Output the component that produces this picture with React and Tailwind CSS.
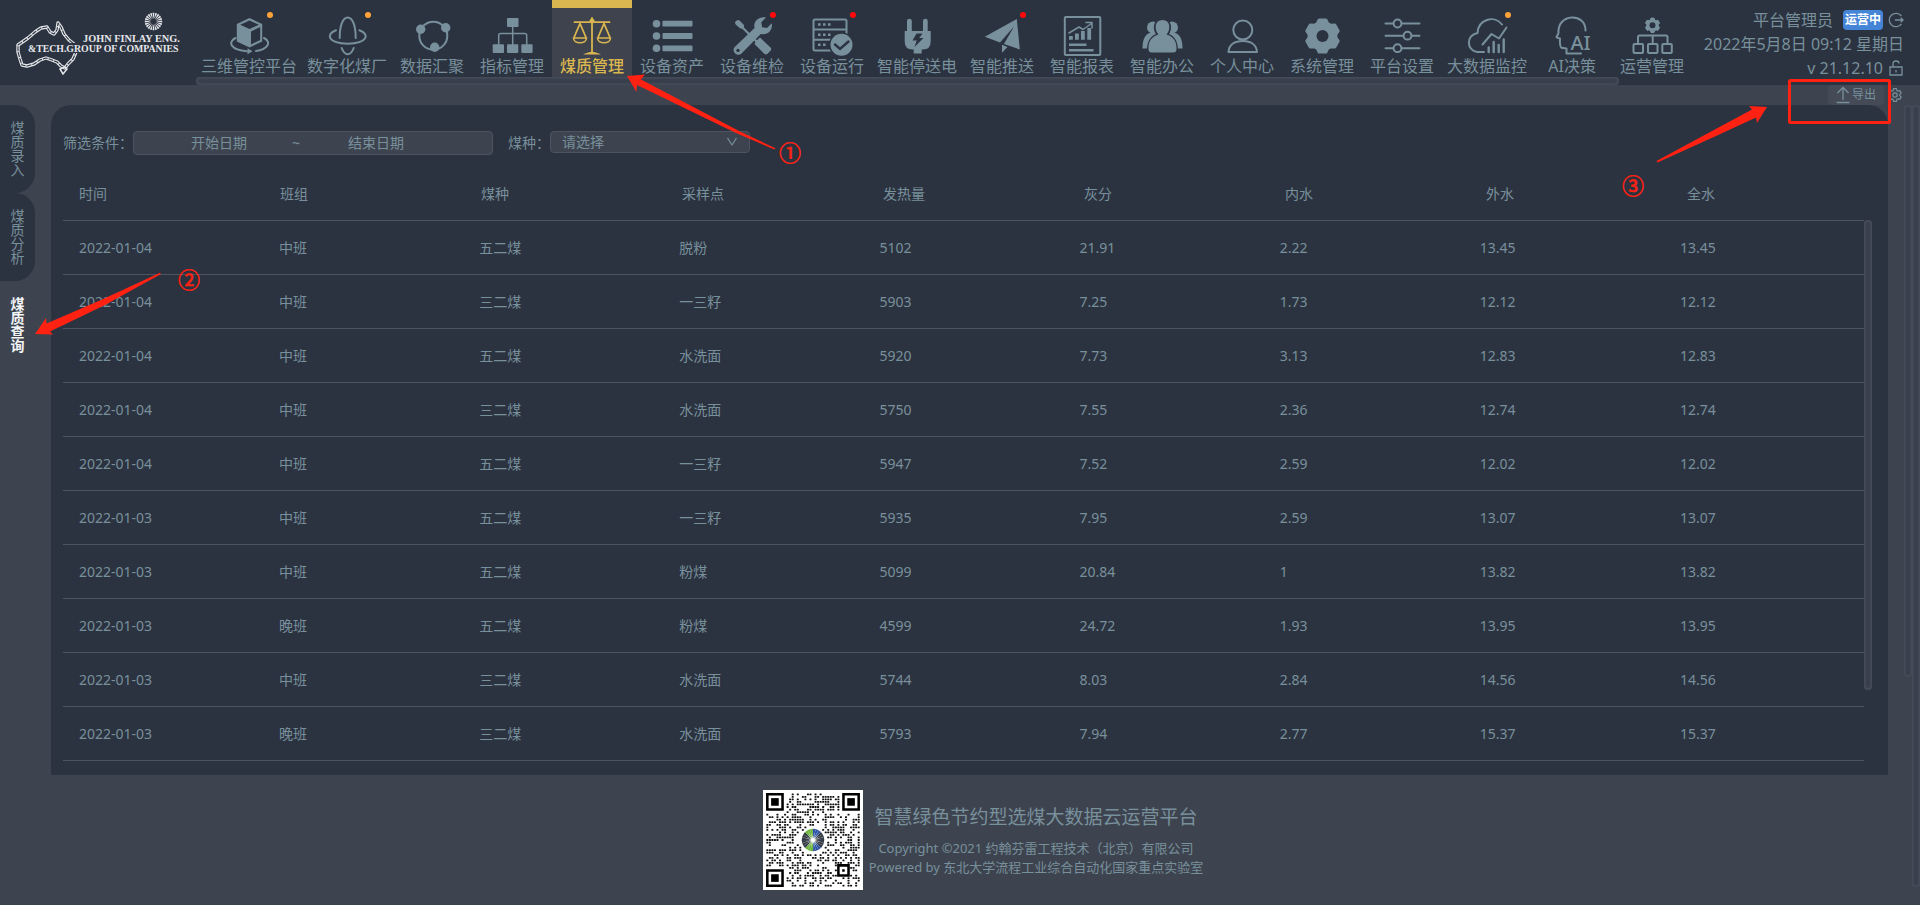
import React from 'react';

function gearPath(cx, cy, outer, inner, teeth) {
  const points = [];
  const step = (Math.PI * 2) / teeth;
  for (let i = 0; i < teeth; i++) {
    const mid = i * step + step / 2;
    [[-0.38, inner], [-0.2, outer], [0.2, outer], [0.38, inner]].forEach(([k, r]) => {
      const a = mid + k * step;
      points.push(`${(cx + Math.cos(a) * r).toFixed(1)},${(cy + Math.sin(a) * r).toFixed(1)}`);
    });
  }
  return `M${points.join('L')}Z`;
}

const line = { fill: 'none', stroke: 'currentColor', strokeWidth: 2, strokeLinecap: 'round', strokeLinejoin: 'round' };

const icons = {
  cube: (
    <>
      <path d="M20.5 2 33.2 8v17.5L20.5 31.5 7.8 25.5V8Z" fill="currentColor" />
      <path d="M20.5 4.6 29.8 8.7 20.5 13 11.2 8.7ZM22 15.4l9.2-4.5V24l-9.2 4.6Z" className="fill-[#2c3340]" />
      <path d="M6.5 22C2.5 24 1.3 27 3 29.6 5 32.5 10 34.6 18 35.2M35 22c4 2 5 5 3.3 7.6-2 2.9-5.5 4.6-11.3 5.4" {...line} />
      <path d="m18.5 32.2 5 3-5 3z" fill="currentColor" />
    </>
  ),
  orbit: (
    <g {...line}>
      <path d="M9 14.3C-1.5 18 .5 27.500 20.7 27.700 41 27.5 43 18 32.4 14.3" />
      <path d="M12.7 22C12.7 9 16 1.5 20.7 1.5S28.7 9 28.7 22M14.7 32c1.5 4 3.5 6.3 6 6.3s4.5-2.3 6-6.3" />
    </g>
  ),
  ring: (
    <>
      <circle cx="21.3" cy="19.7" r="14" {...line} />
      <g fill="currentColor"><circle cx="8.7" cy="13.3" r="4.7" /><circle cx="33.7" cy="11.7" r="4.7" /><circle cx="22.7" cy="31.3" r="4.7" /></g>
    </>
  ),
  tree: (
    <>
      <path d="M20.7 10V29M6.7 29V19.500q0-2 2-2H32.7q2 0 2 2V29" {...line} strokeWidth="1.5" />
      <g fill="currentColor"><rect x="15" y="2" width="11.5" height="9" rx="1" /><rect x=".7" y="28.3" width="11.3" height="8.7" rx="1" /><rect x="15" y="28.3" width="11.3" height="8.7" rx="1" /><rect x="29.3" y="28.3" width="11.3" height="8.7" rx="1" /></g>
    </>
  ),
  scale: (
    <>
      <path d="M20 2v35M2.5 6.2h35M8 7.5 2 21.5M8 7.5l6 14M32 7.5l-6 14M32 7.5l6 14" {...line} strokeWidth="1.8" />
      <path d="M1.5 22h13c0 3-3 4.7-6.5 4.7S1.5 25 1.5 22ZM25.5 22h13c0 3-3 4.7-6.5 4.7S25.5 25 25.5 22Z" {...line} strokeWidth="1.6" />
      <path d="M11 38.5q6-2.7 9-2.7t9 2.7z" fill="currentColor" /><circle cx="20" cy="5" r="2.5" fill="currentColor" />
    </>
  ),
  list: (
    <g fill="currentColor">
      {[7.7, 20, 32.3].map((y) => <g key={y}><circle cx="4.5" cy={y} r="3.8" /><rect x="10.5" y={y - 2.9} width="30" height="5.8" rx=".8" /></g>)}
    </g>
  ),
  tools: (
    <>
      <path d="M8.5 9.5 26 27" {...line} strokeWidth="2.2" />
      <path d="M3.5 5.5q2-2.5 4-1l4 4q1.5 2-.3 3.5-1.7 1.4-3.5 0l-4-3.500q-1.2-1.5-.2-3ZM24 25l4-3.5L38.5 31.5q1.5 1.5 0 3.2l-3 3q-1.7 1.5-3.2 0L22.5 28Z" fill="currentColor" />
      <path d="M34 1.5 29.3 6.3l.8 4.9 4.9.8 4.8-4.7c1.2 7-4.2 12.2-11 10.6L9.500 37.5c-4.5 4-10.7-2.3-6.500-6.7L22.5 12C21 5 27 0 34 1.5Z" fill="currentColor" />
      <circle cx="6" cy="34.4" r="1.7" className="fill-[#2c3340]" />
    </>
  ),
  server: (
    <>
      <rect x="1.5" y="3.5" width="33" height="31" rx="1.5" {...line} />
      <path d="M2 13.5h32M2 23.8h32" {...line} />
      <path d="M6 8.5h13M6 18.8h13M6 28.8h10" fill="none" stroke="currentColor" strokeWidth="2.6" strokeDasharray="2.6 2.4" />
      <circle cx="29.5" cy="28.8" r="12.5" className="fill-[#2c3340]" />
      <circle cx="29.5" cy="28.8" r="11" fill="currentColor" />
      <path d="m23 28.5 5 4.5 8.5-7.5" fill="none" className="stroke-[#2c3340]" strokeWidth="2.4" strokeLinecap="round" />
    </>
  ),
  plug: (
    <>
      <path d="M10 5q0-2.3 2.4-2.3T14.8 5v10H26V5q0-2.3 2.4-2.3T30.7 5v10h3v10.5q0 8-8 8h-1v4h-8v-4h-1q-8 0-8-8V15H10Z" fill="currentColor" />
      <path d="M19.5 17.5h6L22.3 22h4.2l-9 9 2.2-6.5h-4.2Z" className="fill-[#2c3340]" />
    </>
  ),
  plane: (
    <path d="M34.8 3 2.8 20.7 18 26.5 32 10.5 22 28 37.8 33.5ZM20 28.8v8L25.5 31Z" fill="currentColor" />
  ),
  report: (
    <>
      <rect x="2.8" y="1" width="35.5" height="38" rx="1" {...line} />
      <path d="M7 17 17 11l4 2.5 8.5-6M24 6.5h6v5.5" {...line} strokeWidth="1.5" />
      <path d="M7 20h3.8v3.700H7ZM13 17.5h3.8v6.2H13ZM19 15h3.8v8.7H19ZM25.3 12h3.8v11.7h-3.8ZM7 27.5h17.5V30H7ZM7 33h24.5v2.5H7Z" fill="currentColor" />
    </>
  ),
  people: (
    <>
      <g fill="currentColor"><circle cx="11" cy="11.5" r="6" /><circle cx="30" cy="11.5" r="6" /><path d="M.5 32.5C.5 22 4 16.5 11 16.5h19c7 0 10.5 5.5 10.5 16Z" /></g>
      <path d="M20.5 2.5c9 0 10.5 10 6.5 15.5 6 2.5 9.5 8 9 18.5q-15.5 5-31 0c-.5-10.5 3-16 9-18.5C10 12.500 11.5 2.5 20.5 2.5Z" className="fill-[#2c3340]" />
      <path d="M20.5 4c8 0 8.5 9.5 4 14.5 6.5 2 10.5 6.5 10 15q-.3 3-3 3H9.5q-2.7 0-3-3c-.5-8.5 3.5-13 10-15C12 13.5 12.5 4 20.5 4Z" fill="currentColor" />
    </>
  ),
  person: (
    <g {...line}><circle cx="20.8" cy="14" r="9.5" /><path d="M6.5 36C7 28.5 13 25 20.8 25S34.5 28.5 35 36Z" /></g>
  ),
  gear: (
    <>
      <path d={gearPath(20.5, 20, 16.5, 13.5, 6)} fill="currentColor" stroke="currentColor" strokeWidth="3" strokeLinejoin="round" />
      <circle cx="20.5" cy="20" r="6" className="fill-[#2c3340]" />
    </>
  ),
  sliders: (
    <g {...line}>
      <path d="M3.5 7.5h34M3.5 19.7h34M3.5 32.2h34" />
      {[[15.5, 7.5], [25.5, 19.7], [15.5, 32.2]].map(([x, y]) => <circle key={y} cx={x} cy={y} r="3.9" className="fill-[#2c3340]" />)}
    </g>
  ),
  cloud: (
    <g {...line}>
      <path d="M17 36H10.5C-.5 35-1.5 19 10.5 17 11 3.5 27-1.5 35 8.5" />
      <path d="m15.5 28.5 9-10.5 7.5 4.5L39.5 11.5" />
      <path d="M21.7 31.5V36M26.7 26v10M31.7 29v7M36.7 23.5V36" strokeWidth="2.4" />
    </g>
  ),
  ai: (
    <>
      <path d="M33.5 14.500C34-3.5 5-3 6.5 17.2L4.500 21q.5 1 3.5 1.5-.5 8 1.5 9.300l5 .7v5H29" {...line} />
      <text x="18.5" y="33.5" fontSize="20" fontWeight="500" fill="currentColor" className="font-['Noto_Sans']">AI</text>
    </>
  ),
  ops: (
    <>
      <path d={gearPath(20.5, 9.3, 7.4, 5.8, 6)} fill="currentColor" stroke="currentColor" strokeWidth="1" strokeLinejoin="round" />
      <circle cx="20.5" cy="9.3" r="3" className="fill-[#2c3340]" />
      <g {...line}><path d="M6 27v-6q0-1.5 1.5-1.5h26.5q1.5 0 1.500 1.5v6M20.7 19.5V27" /><rect x="1.5" y="28" width="9.5" height="9" rx="1" /><rect x="16" y="28" width="9.5" height="9" rx="1" /><rect x="30.3" y="28" width="9.5" height="9" rx="1" /></g>
    </>
  ),
};

const navItems = [
  { label: '三维管控平台', icon: 'cube', dot: 'orange' },
  { label: '数字化煤厂', icon: 'orbit', dot: 'orange' },
  { label: '数据汇聚', icon: 'ring' },
  { label: '指标管理', icon: 'tree' },
  { label: '煤质管理', icon: 'scale', active: true },
  { label: '设备资产', icon: 'list' },
  { label: '设备维检', icon: 'tools', dot: 'red' },
  { label: '设备运行', icon: 'server', dot: 'red' },
  { label: '智能停送电', icon: 'plug' },
  { label: '智能推送', icon: 'plane', dot: 'red' },
  { label: '智能报表', icon: 'report' },
  { label: '智能办公', icon: 'people' },
  { label: '个人中心', icon: 'person' },
  { label: '系统管理', icon: 'gear' },
  { label: '平台设置', icon: 'sliders' },
  { label: '大数据监控', icon: 'cloud', dot: 'orange' },
  { label: 'AI决策', icon: 'ai' },
  { label: '运营管理', icon: 'ops' },
];

const columns = ['时间', '班组', '煤种', '采样点', '发热量', '灰分', '内水', '外水', '全水'];
const rows = [
  ['2022-01-04', '中班', '五二煤', '脱粉', '5102', '21.91', '2.22', '13.45', '13.45'],
  ['2022-01-04', '中班', '三二煤', '一三籽', '5903', '7.25', '1.73', '12.12', '12.12'],
  ['2022-01-04', '中班', '五二煤', '水洗面', '5920', '7.73', '3.13', '12.83', '12.83'],
  ['2022-01-04', '中班', '三二煤', '水洗面', '5750', '7.55', '2.36', '12.74', '12.74'],
  ['2022-01-04', '中班', '五二煤', '一三籽', '5947', '7.52', '2.59', '12.02', '12.02'],
  ['2022-01-03', '中班', '五二煤', '一三籽', '5935', '7.95', '2.59', '13.07', '13.07'],
  ['2022-01-03', '中班', '五二煤', '粉煤', '5099', '20.84', '1', '13.82', '13.82'],
  ['2022-01-03', '晚班', '五二煤', '粉煤', '4599', '24.72', '1.93', '13.95', '13.95'],
  ['2022-01-03', '中班', '三二煤', '水洗面', '5744', '8.03', '2.84', '14.56', '14.56'],
  ['2022-01-03', '晚班', '三二煤', '水洗面', '5793', '7.94', '2.77', '15.37', '15.37'],
];

function Logo() {
  const coast = 'M18 45 28 38 35 32 41 28 47 27 50 32 54 34 57 30 58 23 61 27 64 34 69 40 74 44 76 52 73 59 68 64 65 68 61 66 57 62 52 60 46 58 40 60 34 64 27 66 22 65 20 59 18 52Z';
  return (
    <svg viewBox="0 0 190 80" className="h-20 w-[190px] shrink-0 text-[#e4e7ea]" role="img" aria-label="John Finlay">
      <path d={coast} fill="none" stroke="currentColor" strokeWidth="3.4" strokeLinejoin="round" />
      <path d={coast} fill="none" className="stroke-[#2c3340]" strokeWidth="1.1" strokeLinejoin="round" strokeDasharray="5 1" />
      <path d="m60 69 3 5 4-5-2-2Z" fill="none" stroke="currentColor" strokeWidth="1.5" />
      <rect x="27" y="43" width="55" height="10" className="fill-[#2c3340]" />
      {Array.from({ length: 20 }, (_, i) => (
        <path key={i} d="M153.5 19 152.5 12.8h2Z" fill="currentColor" transform={`rotate(${i * 18} 153.5 21.5)`} />
      ))}
      <g fill="currentColor" fontWeight="700" fontFamily="Liberation Serif, serif">
        <text x="83" y="41.5" fontSize="10.3">JOHN FINLAY ENG.</text>
        <text x="28" y="52" fontSize="9.8">&amp;TECH.GROUP OF COMPANIES</text>
      </g>
    </svg>
  );
}

function NavItem({ label, icon, dot, active }) {
  return (
    <a
      href="#"
      className={`flex h-[77px] min-w-20 shrink-0 flex-col items-center border-t-8 px-[5px] pt-2 ${
        active ? 'border-[#d9b650] bg-[#3e434e] text-[#d9b650] font-medium' : 'border-transparent'
      }`}
    >
      <span className="relative block h-10 w-10">
        <svg viewBox="0 0 40 40" className="h-10 w-10 overflow-visible" aria-hidden="true">{icons[icon]}</svg>
        {dot && <i className={`absolute -top-1 -right-1 h-1.5 w-1.5 rounded-full ${dot === 'red' ? 'bg-[#ff0a0a]' : 'bg-[#ffa238]'}`} />}
      </span>
      <span className="text-base leading-5 whitespace-nowrap">{label}</span>
    </a>
  );
}

function Thumb({ className }) {
  return <div aria-hidden="true" className={`rounded-full bg-[#383e4b] shadow-[inset_0_0_3px_1px_#4c5360] ${className}`} />;
}

function QrCode() {
  const n = 37;
  const finder = (x, y) => (x < 8 && y < 8) || (x > 28 && y < 8) || (x < 8 && y > 28);
  const align = (x, y) => x > 27 && x < 33 && y > 27 && y < 33;
  const center = (x, y) => Math.hypot(x - 18, y - 18) < 5.5;
  const dots = [];
  let seed = 4211;
  for (let y = 0; y < n; y++) {
    for (let x = 0; x < n; x++) {
      seed = (seed * 1103515245 + 12345) % 2147483648;
      if (finder(x, y) || align(x, y) || center(x, y)) continue;
      if ((seed >> 12) % 100 < 49) dots.push([x, y]);
    }
  }
  return (
    <svg viewBox="-1.2 -1.2 39.4 39.4" className="h-[100px] w-[100px] shrink-0 bg-white" role="img" aria-label="QR">
      {dots.map(([x, y]) => <rect key={`${x}-${y}`} x={x + 0.1} y={y + 0.15} width=".8" height=".7" rx=".2" fill="#111" />)}
      {[[0, 0], [30, 0], [0, 30]].map(([x, y]) => (
        <g key={`${x}-${y}`} fill="#000"><path fillRule="evenodd" d={`M${x} ${y}h7v7h-7zM${x + 1} ${y + 1}v5h5v-5z`} /><rect x={x + 2} y={y + 2} width="3" height="3" /></g>
      ))}
      <path fillRule="evenodd" d="M28 28h5v5h-5zM29 29v3h3v-3zM30 30h1v1h-1z" fill="#000" />
      {Array.from({ length: 24 }, (_, i) => (
        <path key={i} d="M18.5 17.8 17.9 14.1h1.2Z" transform={`rotate(${i * 15 + 7} 18.5 18.5)`} fill={i < 3 || (i > 8 && i < 12) ? '#2f55a4' : i > 20 || (i > 11 && i < 15) ? '#6cb33f' : '#333a44'} />
      ))}
    </svg>
  );
}

function Annotations() {
  return (
    <svg className="pointer-events-none absolute top-0 left-0 h-[420px] w-[1920px] text-[#ff2213]" aria-hidden="true">
      <g fill="currentColor">
        <path d="M627 76 645 74.5 641 79.5 741 132 775.5 148.3 774.5 149.5 736 133 637 85 636.5 92Z" />
        <path d="M35 334 46 318 46.5 323.5 101 300 160 272.7 161 274 105 305 50 331.5 53 334.5Z" />
        <path d="M1767 107 1749 106 1752 109.5 1712 131 1656.5 161 1657.5 162.5 1716 136 1756 117.5 1757 123Z" />
      </g>
      <rect x="1789.5" y="80.5" width="100" height="42" rx="1" fill="none" stroke="currentColor" strokeWidth="3" />
      <g fill="currentColor" stroke="currentColor" strokeWidth=".6" fontSize="22" fontFamily="Noto Sans CJK SC, sans-serif" textAnchor="middle">
        <text x="790" y="161">①</text>
        <text x="189" y="288">②</text>
        <text x="1633" y="194">③</text>
      </g>
    </svg>
  );
}

export default function App() {
  return (
    <div className="relative flex min-h-screen flex-col overflow-hidden bg-[#3e444f] font-['Noto_Sans','Noto_Sans_CJK_SC',sans-serif] text-sm text-[#78909c]">
      <header className="flex h-[85px] shrink-0 bg-[#2c3340]">
        <div className="w-[196px] shrink-0"><Logo /></div>
        <div className="flex min-w-0 flex-1 flex-col">
          <nav className="flex">{navItems.map((item) => <NavItem key={item.label} {...item} />)}</nav>
          <Thumb className="h-2 w-[1423px] max-w-full" />
        </div>
        <div className="flex shrink-0 flex-col items-end pt-2 pr-4 text-base leading-6">
          <div className="flex items-center gap-[10px]">
            <span>平台管理员</span>
            <span className="flex items-center gap-[5px]">
              <span className="flex h-5 items-center rounded-sm bg-[#4585d8] px-0.5 text-xs font-bold text-white">运营中</span>
              <button type="button" aria-label="退出">
                <svg viewBox="0 0 16 16" className="h-4 w-4"><path d="M13.5 4.2a6.7 6.7 0 1 0 0 7.6M7 8h8M12.7 5.8 15 8l-2.3 2.2" fill="none" stroke="currentColor" strokeWidth="1.3" /></svg>
              </button>
            </span>
          </div>
          <div className="whitespace-nowrap">2022年5月8日 09:12 星期日</div>
          <div className="flex items-center gap-[5px]">
            <span>v 21.12.10</span>
            <svg viewBox="0 0 16 16" className="h-4 w-4" aria-hidden="true"><path d="M2 7h12v8H2zM5 7V3.8Q5 1 8 1t3 2.5M8 10v2.5" fill="none" stroke="currentColor" strokeWidth="1.3" /></svg>
          </div>
        </div>
      </header>

      <div className="flex h-5 shrink-0 items-center justify-end gap-1 pr-[18px]">
        <button type="button" className="flex h-5 w-14 items-center justify-center gap-0.5 rounded bg-[#444a56] text-xs">
          <svg viewBox="0 0 14 18" className="h-[18px] w-3.5" aria-hidden="true"><path d="M7 14V1.500M1.500 7 7 1.500 12.500 7M.5 16.5h13" fill="none" stroke="currentColor" strokeWidth="1.3" /></svg>
          导出
        </button>
        <button type="button" aria-label="设置">
          <svg viewBox="0 0 14 14" className="h-3.5 w-3.5"><path d={gearPath(7, 7, 6.5, 4.8, 6)} fill="none" stroke="currentColor" strokeWidth="1.2" /><circle cx="7" cy="7" r="2.2" fill="none" stroke="currentColor" strokeWidth="1.2" /></svg>
        </button>
      </div>

      <div className="flex">
        <aside className="w-[51px] shrink-0">
          {['煤质录入', '煤质分析', '煤质查询'].map((tab, i) => (
            <a key={tab} href="#" className={`flex h-22 w-[35px] items-center justify-center rounded-r-[20px] pr-0.5 text-sm leading-[14px] [writing-mode:vertical-rl] ${i === 2 ? 'font-bold text-[#f2f4f5]' : 'bg-[#2c3340]'}`}>
              {tab}
            </a>
          ))}
        </aside>

        <main className="min-w-0 flex-1 rounded-t-[20px] bg-[#2c3340] px-3 pt-[26px] pb-3.5">
          <div className="flex items-start">
            <span className="leading-6">筛选条件：</span>
            <div className="flex h-6 w-[360px] items-center rounded border border-[#4d5460] bg-[#3e444f]">
              <input aria-label="开始日期" placeholder="开始日期" className="w-[154px] bg-transparent pl-4 text-center placeholder:text-[#78909c]" />
              <span className="w-4 shrink-0 text-center">~</span>
              <input aria-label="结束日期" placeholder="结束日期" className="min-w-0 flex-1 bg-transparent pr-11 text-center placeholder:text-[#78909c]" />
            </div>
            <label htmlFor="coal" className="ml-[15px] leading-6">煤种：</label>
            <div className="relative">
              <select id="coal" className="h-[22px] w-[200px] appearance-none rounded border border-[#4d5460] bg-[#3e444f] pl-[11px] leading-5">
                <option>请选择</option>
              </select>
              <svg viewBox="0 0 12 12" className="pointer-events-none absolute top-[5px] right-3 h-3 w-3" aria-hidden="true"><path d="m1.5 2 4.5 7 4.5-7" fill="none" stroke="currentColor" strokeWidth="1.2" /></svg>
            </div>
          </div>

          <div className="relative mr-1">
            <table className="block text-left">
              <thead className="block">
                <tr className="grid grid-cols-9">
                  {columns.map((c) => <th key={c} className="px-4 pt-[29px] pb-4 leading-5 font-normal">{c}</th>)}
                </tr>
              </thead>
              <tbody className="mr-2 block border-t border-[#4d5460]">
                {rows.map((row, i) => (
                  <tr key={i} className="grid grid-cols-9 border-b border-[#4d5460]">
                    {row.map((cell, j) => <td key={j} className="h-[53px] px-4 leading-[53px]">{cell}</td>)}
                  </tr>
                ))}
              </tbody>
            </table>
            <Thumb className="absolute top-[65px] right-0 h-[470px] w-2" />
          </div>
        </main>

        <div className="flex w-8 shrink-0 justify-end">
          <Thumb className="h-[572px] w-2" />
          <div className="relative w-2"><Thumb className="absolute top-0 h-[782px] w-2" /></div>
        </div>
      </div>

      <footer className="flex items-center justify-center gap-1.5 pt-[15px] pl-[46px] text-[13px]">
        <QrCode />
        <div className="flex flex-col items-center leading-[19px]">
          <p className="mb-2 text-[19px] leading-7">智慧绿色节约型选煤大数据云运营平台</p>
          <p>Copyright ©2021 约翰芬雷工程技术（北京）有限公司</p>
          <p>Powered by 东北大学流程工业综合自动化国家重点实验室</p>
        </div>
      </footer>

      <Annotations />
    </div>
  );
}
